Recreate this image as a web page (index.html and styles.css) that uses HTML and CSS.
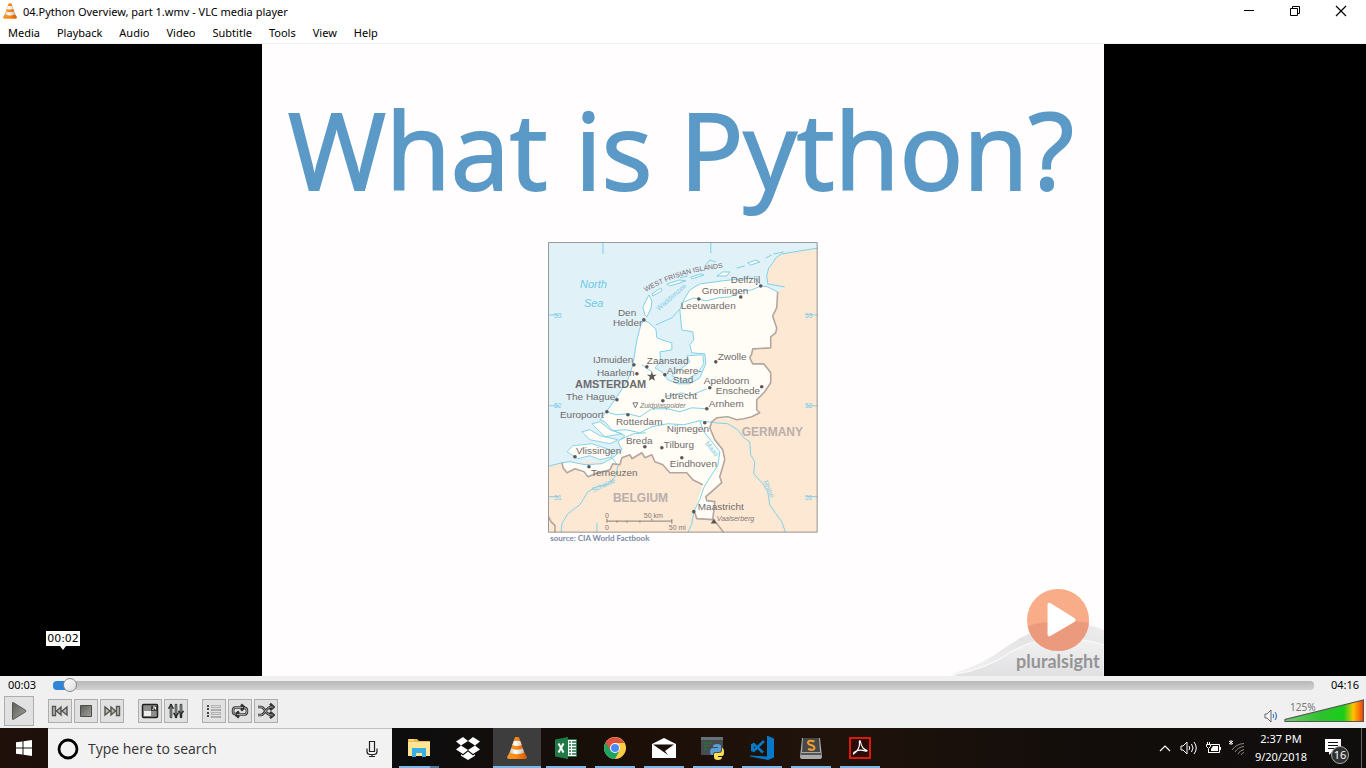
FILE: index.html
```html
<!DOCTYPE html>
<html lang="en">
<head>
<meta charset="utf-8">
<title>04.Python Overview, part 1.wmv - VLC media player</title>
<link rel="stylesheet" href="styles.css">
</head>
<body>
<svg width="0" height="0" class="defs" aria-hidden="true">
  <defs>
    <linearGradient id="coneOrange" x1="0" x2="1"><stop offset="0" stop-color="#f09a2c"/><stop offset=".45" stop-color="#ff8a12"/><stop offset="1" stop-color="#d65c04"/></linearGradient>
    <linearGradient id="coneWhite" x1="0" x2="1"><stop offset="0" stop-color="#c8c8c8"/><stop offset=".4" stop-color="#fff"/><stop offset="1" stop-color="#bcbcbc"/></linearGradient>
    <linearGradient id="steel" x1="0" x2="1" y2="1"><stop offset="0" stop-color="#5c5e5a"/><stop offset="1" stop-color="#a0a29d"/></linearGradient>
    <symbol id="cone" viewBox="0 0 20 22">
      <path d="M3 15 0 20q0 2 2 2h16q2 0 2-2l-3-5z" fill="url(#coneOrange)"/>
      <path d="M9 0h2q1 0 1.300 1l5.200 15q-7.500 4-15 0L7.700 1Q8 0 9 0z" fill="url(#coneOrange)"/>
      <path d="M6.700 4h6.600l1.400 4q-4.700 2-9.400 0zM4.200 11.500q5.800 2.500 11.600 0l1.400 4q-7.200 3.500-14.400 0z" fill="url(#coneWhite)"/>
    </symbol>
  </defs>
</svg>

<header class="titlebar">
  <svg class="app-icon"><use href="#cone"/></svg>
  <h1 class="window-title">04.Python Overview, part 1.wmv - VLC media player</h1>
  <div class="window-buttons">
    <button aria-label="Minimize"><svg width="12" height="12" viewBox="0 0 12 12"><path d="M1 5.500h10" stroke="#000"/></svg></button>
    <button aria-label="Restore"><svg width="12" height="12" viewBox="0 0 12 12" fill="none" stroke="#000"><path d="M1.500 3.500h7v7h-7zM3.500 3V1.500h7v7H9"/></svg></button>
    <button aria-label="Close"><svg width="12" height="12" viewBox="0 0 12 12"><path d="M1 1l10 10M11 1 1 11" stroke="#000" stroke-width="1.200"/></svg></button>
  </div>
</header>

<nav class="menubar" aria-label="Menu">
  <button>Media</button><button>Playback</button><button>Audio</button><button>Video</button><button>Subtitle</button><button>Tools</button><button>View</button><button>Help</button>
</nav>

<main class="video">
  <section class="slide">
    <h2 class="headline">What is Python?</h2>
    <figure class="map">
      <svg class="map-art" viewBox="548 242 270 291" role="img" aria-label="Map of the Netherlands">
        <path fill="#e0f1f8" d="M548 242h270v291H548z"/>
        <!-- neighbouring countries -->
        <path fill="#fde8d3" d="M819 248 800 251 782 254 776 258 773 263 769 268 767 276 768 284 785 287 778 292 765 330 740 345 740 400 708 415 700 470 640 450 612 462 562 463 547 467V534H819z"/>
        <!-- mainland -->
        <path fill="#fffdf6" d="M778 292 777 308 773 316 777 328 776 333 771 337V348L753 349 750 358 753 364 764 364 771 373 771 383 765 392 757 400 757 410 760 413 752 417 737 420 717 418 712 422 710 428 715 440 723 450 725 460 720 477 722 483 713 491 706 497 707 501 715 502 713 520 697 519 695 513 698 500 703 485 693 480 687 473 670 473 663 465 655 462 652 455 645 458 642 453 632 459 630 455 622 458 620 465 613 464 610 470 598 473 588 477 575 469 567 473 563 468 562 463 570 462 585 465 602 464 613 458 622 450 618 442 625 436 612 430 605 422 600 420 607 411 617 397 628 380 633 365 637 340 641 325 644 320 649 323 656 329 657 338 665 341 672 343 672 350 660 352 661 362 655 368 662 372 668 380 678 384 690 384 700 378 706 364 705 354 692 353 690 345 694 340 693 332 682 330 680 310 684 300 690 290 700 284 722 281 740 279 755 278 762 286 768 287z"/>
        <!-- polder and delta islands -->
        <path fill="#fffdf6" stroke="#8bd4ea" d="M672 376 690 362 687 356 703 355 704 364 697 374 684 381zM567 452 573 446 592 444 610 450 612 457 600 460 590 456 578 459zM582 432 590 430 600 436 618 440 610 444 590 440zM592 424 600 422 610 430 622 434 605 437z"/>
        <path fill="#fffdf6" stroke="#7cd0e8" d="M645 315l-2-8 3-6 3-6 3 6-1 8-4 8zM652 294l9-6 1 3-9 5zM667 284l13-4 6 1-16 5zM691 277l10-3 3 1-12 4zM717 276l6-4 7 0-3 4zM737 268l8-2M748 263l8-3 4 2-9 3zM766 258l6-3M774 254l10-2"/>
        <g fill="none" stroke="#7fd1e9">
          <path d="M819 248 800 251 782 254 776 258 773 263 769 268 767 276 768 284 785 287M778 292 768 287 762 286 755 278 740 279 722 281 700 284 690 290 684 300 680 310 682 330 693 332 694 340 690 345 692 353 705 354 706 364 700 378 690 384 678 384 668 380 662 372 655 368 661 362 660 352 672 350 672 343 665 341 657 338 656 329 649 323 644 320 641 325 637 340 633 365 628 380 617 397 607 411 600 420 605 422 612 430 625 436 618 442 622 450 613 458 602 464 585 465 570 462 562 463 547 467"/>
          <path d="M656 325 672 318 680 309M682 303 694 298 706 301 718 298 730 297 742 291 752 290 761 286M642 365 652 372M606 412 616 415 628 414 640 417 652 409 668 409 680 412 692 408 707 409M612 431 626 430 640 433 652 427 668 424 684 425 700 421 715 423 728 424 738 430 744 438 750 442 751 455 755 462 754 474 763 484 768 492 770 505 776 514 782 522 786 533M700 421 704 432 712 442 720 452 718 466 710 478 704 488 700 500 694 512 692 524 688 533M620 440 634 434 646 433M612 458 618 466 616 476 608 485 597 487 588 492 580 505 568 514 562 524 561 533M665 397 682 393 690 396 707 389"/>
          <path d="M706 265l4-5 6 2M680 278l8-2M603 242v12M711 242v11M548 315h11M548 406h11M548 497h11M818 315h-11M818 406h-11M818 497h-11M597 533v-10"/>
        </g>
        <g fill="none" stroke="#b3a6a0" stroke-width="1.600" stroke-linejoin="round">
          <path d="M778 292 777 308 773 316 777 328 776 333 771 337V348L753 349 752 354 750 358 753 364 764 364 768 369 771 373 771 383 765 392 757 400 757 410 760 413 752 417 744 419 737 420 728 417 717 418 712 422 710 428 715 440 723 450 725 460 720 477 722 483 713 491 706 497 707 501 715 502 713 520 697 519 695 513M703 485 693 480 687 473 670 473 663 465 655 462 652 455 645 458 642 453 632 459 630 455 622 458 620 465 613 464 610 470 598 473 588 477 584 472 575 469 567 473 563 468 562 463M548 516 551 522 555 526V533M714 520 724 533"/>
        </g>
        <path fill="none" stroke="#999" d="M548.500 242.500h269v290h-269z"/>
        <g fill="#5d5658">
          <circle cx="644" cy="320" r="1.800"/><circle cx="761" cy="286" r="1.800"/><circle cx="741" cy="297" r="1.800"/><circle cx="699" cy="299" r="1.800"/><circle cx="634" cy="365" r="1.800"/><circle cx="647" cy="367" r="1.800"/><circle cx="637" cy="374" r="1.800"/><circle cx="665" cy="375" r="1.800"/><circle cx="716" cy="362" r="1.800"/><circle cx="710" cy="388" r="1.800"/><circle cx="762" cy="387" r="1.800"/><circle cx="617" cy="400" r="1.800"/><circle cx="663" cy="401" r="1.800"/><circle cx="607" cy="412" r="1.800"/><circle cx="628" cy="415" r="1.800"/><circle cx="707" cy="409" r="1.800"/><circle cx="705" cy="423" r="1.800"/><circle cx="645" cy="447" r="1.800"/><circle cx="662" cy="448" r="1.800"/><circle cx="682" cy="458" r="1.800"/><circle cx="575" cy="457" r="1.800"/><circle cx="589" cy="467" r="1.800"/><circle cx="694" cy="512" r="1.800"/>
          <path d="M652 371l1 4h4l-3 2 1 4-3-2-3 2 1-4-3-2h4zM714 519l3 5h-6z"/>
        </g>
        <path d="M633 403h5l-2.500 5z" fill="none" stroke="#777"/>
        <path d="M607 519v4M607 521.500h65v-2M617 521v2M627 521v2M640 521v2M652 519v2M672 521v3" fill="none" stroke="#8b7c75"/>
        <g class="city">
          <text x="618" y="316">Den</text><text x="613" y="326">Helder</text><text x="731" y="283">Delfzijl</text><text x="702" y="294">Groningen</text><text x="681" y="309">Leeuwarden</text>
          <text x="593" y="363">IJmuiden</text><text x="647" y="364">Zaanstad</text><text x="597" y="376">Haarlem</text><text x="667" y="374">Almere-</text><text x="673" y="383">Stad</text>
          <text x="718" y="360">Zwolle</text><text x="704" y="384">Apeldoorn</text><text x="716" y="394">Enschede</text><text x="566" y="400">The Hague</text><text x="665" y="399">Utrecht</text>
          <text x="560" y="418">Europoort</text><text x="616" y="425">Rotterdam</text><text x="709" y="407">Arnhem</text><text x="667" y="432">Nijmegen</text><text x="626" y="444">Breda</text><text x="664" y="448">Tilburg</text>
          <text x="576" y="454">Vlissingen</text><text x="591" y="476">Terneuzen</text><text x="670" y="467">Eindhoven</text><text x="698" y="510">Maastricht</text>
        </g>
        <text class="capital" x="575" y="388">AMSTERDAM</text>
        <g class="country"><text x="742" y="436">GERMANY</text><text x="613" y="502">BELGIUM</text></g>
        <g class="sea"><text x="580" y="288">North</text><text x="584" y="307">Sea</text></g>
        <g class="minor"><text x="640" y="408">Zuidplaspolder</text><text x="717" y="521">Vaalserberg</text></g>
        <g class="tiny"><text x="605" y="518">0</text><text x="605" y="530">0</text><text x="644" y="518">50 km</text><text x="669" y="530">50 mi</text></g>
        <path id="islands" d="M646 292q35-21 85-25" fill="none"/>
        <text class="islands"><textPath href="#islands">WEST FRISIAN ISLANDS</textPath></text>
        <g class="river"><text transform="translate(659 311) rotate(-41)">Waddenzee</text><text transform="translate(593 493) rotate(-25)">Schelde</text><text transform="translate(763 482) rotate(65)">Rhine</text><text transform="translate(705 444) rotate(50)">Maas</text>
          <text x="554" y="318">53</text><text x="554" y="408">52</text><text x="554" y="500">51</text><text x="805" y="318">53</text><text x="805" y="408">52</text><text x="805" y="500">51</text></g>
      </svg>
      <figcaption>source: CIA World Factbook</figcaption>
    </figure>
    <svg class="brand" viewBox="944 580 160 96" role="img" aria-label="pluralsight">
      <defs>
        <linearGradient id="hill" x1="0" x2="1" y1="1" y2="0"><stop offset="0" stop-color="#f4f4f4"/><stop offset=".6" stop-color="#e4e4e5"/><stop offset="1" stop-color="#ededee"/></linearGradient>
        <linearGradient id="front" x1="0" y1="0" x2="0" y2="1"><stop offset="0" stop-color="#f2f2f3"/><stop offset="1" stop-color="#e0e0e2"/></linearGradient>
        <clipPath id="disc"><circle cx="1058" cy="620" r="31"/></clipPath>
      </defs>
      <path d="M954 673q28-8 52-26 20-14 42-21 30-7 56 4v47H950z" fill="url(#hill)"/>
      <path d="M956 674q28-4 55-22 30-17 58-14 20 2 35 7v32H954z" fill="url(#front)" stroke="#fafafa"/>
      <circle cx="1058" cy="620" r="31" fill="#f9ac88"/>
      <path clip-path="url(#disc)" d="M1020 630q14-8 31-8 20-3 45 2v30h-76z" fill="#ec9a7d"/>
      <path d="M1048 604.500v30q0 2 2 1l24-14q2-1.500 0-3l-24-15q-2-1-2 1z" fill="#fff" stroke="#fff"/>
      <text x="1016" y="668" class="brand-name">pluralsight</text>
    </svg>
  </section>
  <output class="seek-tip">00:02</output>
</main>

<footer class="controls">
  <div class="seek-row">
    <span>00:03</span>
    <input class="seek" type="range" min="0" max="256" value="2" aria-label="Seek">
    <span>04:16</span>
  </div>
  <div class="button-row">
    <button class="tool play" aria-label="Play"><svg width="20" height="20" viewBox="0 0 20 20"><path d="M3.500 2v16q0 .8.800.4l12.200-7.600q1-.8 0-1.600L4.300 1.600q-.8-.4-.8.4z" fill="url(#steel)" stroke="#555753"/></svg></button>
    <div class="group">
      <button class="tool" aria-label="Previous"><svg width="18" height="18" viewBox="0 0 18 18" fill="#babcb7" stroke="#555753" stroke-width="1.400"><path d="M1.500 4.500h3v9h-3zM10 5v8L5.500 9zM16 5v8l-5-4z"/></svg></button>
      <button class="tool" aria-label="Stop"><svg width="18" height="18" viewBox="0 0 18 18"><path d="M3.500 3.500h11v11h-11z" fill="url(#steel)" stroke="#4b4d49"/></svg></button>
      <button class="tool" aria-label="Next"><svg width="18" height="18" viewBox="0 0 18 18" fill="#babcb7" stroke="#555753" stroke-width="1.400"><path d="M13.500 4.500h3v9h-3zM8 5v8l4.500-4zM2 5v8l5-4z"/></svg></button>
    </div>
    <div class="group">
      <button class="tool" aria-label="Fullscreen"><svg width="18" height="18" viewBox="0 0 18 18"><rect x="1.500" y="2.500" width="15" height="13" rx="1" fill="#8d8f8a" stroke="#222" stroke-width="1.500"/><path d="M3 9h7v5H3z" fill="#eee"/><path d="M10 4h6v5h-6z" fill="#3b3d3a"/><path d="M11.500 8l3-3m-2.500 0h2.500v2.500" stroke="#fff" fill="none"/></svg></button>
      <button class="tool" aria-label="Extended settings"><svg width="18" height="18" viewBox="0 0 18 18" fill="none" stroke-linecap="round"><path d="M4 3v12M9 3v12M14 3v12" stroke="#2e3030" stroke-width="2.600"/><path d="M2 6l2-2.500L6 6M7 11.500l2 2.500 2-2.500M12 9.500l2 2 2-2" stroke="#2e3030" stroke-width="1.800"/><path d="M4 5v10M9 3v9M14 3v7" stroke="#c8c8c8" stroke-width=".8"/></svg></button>
    </div>
    <div class="group">
      <button class="tool" aria-label="Playlist"><svg width="18" height="18" viewBox="0 0 18 18"><path d="M2 3h2v2H2zM2 6h2v2H2zM2 10h2v2H2zM2 13h2v2H2z" fill="#444"/><path d="M6 4.500h10M6 8h10M6 11.500h10M6 15h10" stroke="#888a85" stroke-width="2"/><path d="M6.500 4.500h9M6.500 8h9M6.500 11.500h9M6.500 15h9" stroke="#eee" stroke-width=".8"/></svg></button>
      <button class="tool" aria-label="Loop"><svg width="18" height="18" viewBox="0 0 18 18" fill="none"><path d="M5 12H4Q2 12 2 9t2-3.500h8M13 6h1q2 0 2 3t-2 3.500H6M10 2.500l3.500 3L10 8.500M8 9.500l-3.500 3 3.500 3" stroke="#333" stroke-width="2.600"/><path d="M5 12H4Q2 12 2 9t2-3.500h8M13 6h1q2 0 2 3t-2 3.500H6" stroke="#b5b5b5" stroke-width=".9"/></svg></button>
      <button class="tool" aria-label="Random"><svg width="18" height="18" viewBox="0 0 18 18" fill="none"><path d="M1 5h3c4 0 5 8 10 8h2M1 13h3c4 0 5-8 10-8h2M13 1.800 16.500 5 13 8M13 10l3.500 3-3.500 3" stroke="#333" stroke-width="2.600"/><path d="M1 5h3c4 0 5 8 10 8h2M1 13h3c4 0 5-8 10-8h2" stroke="#b5b5b5" stroke-width=".9"/></svg></button>
    </div>
    <div class="volume">
      <button class="mute" aria-label="Mute"><svg width="15" height="14" viewBox="0 0 15 14" fill="none"><path d="M1 5h2l4-4v12L3 9H1z" fill="#f4f4f4" stroke="#666"/><path d="M9 5q1.500 2 0 4M11 3q3 4 0 8" stroke="#3f78c0" stroke-width="1.200"/></svg></button>
      <div class="volume-meter">
        <svg width="80" height="24" viewBox="0 0 80 24"><defs><linearGradient id="vol"><stop offset="0" stop-color="#72cc72"/><stop offset=".45" stop-color="#2fc02f"/><stop offset=".75" stop-color="#18cf18"/><stop offset=".87" stop-color="#ffc400"/><stop offset="1" stop-color="#f43c0c"/></linearGradient></defs><path d="M1 22.500h78.500V1L1 20.500z" fill="url(#vol)" stroke="#555" stroke-width="1.200"/></svg>
        <label for="volume">125%</label>
        <input id="volume" type="range" min="0" max="125" value="125">
      </div>
    </div>
  </div>
</footer>

<div class="taskbar">
  <button class="start" aria-label="Start"><svg width="16" height="16" viewBox="0 0 16 16"><path d="M0 2.300 6.500 1.400v6.100H0zM7.500 1.200 16 0v7.500H7.500zM0 8.500h6.500v6.100L0 13.700zM7.500 8.500H16V16l-8.500-1.200z" fill="#fff"/></svg></button>
  <label class="search">
    <svg width="22" height="22" viewBox="0 0 22 22"><circle cx="11" cy="11" r="9" fill="none" stroke="#000" stroke-width="2.800"/></svg>
    <input type="text" placeholder="Type here to search" aria-label="Search">
    <svg width="12" height="18" viewBox="0 0 12 18" fill="none" stroke="#222" stroke-width="1.200"><path d="M3.500 1.500h5v10h-5zM1 8.500v3q0 3 3 3h4q3 0 3-3v-3M6 14.500v2M3 16.500h6"/></svg>
  </label>
  <div class="apps">
    <button class="app running stacked" aria-label="File Explorer"><svg width="22" height="20" viewBox="0 0 22 20"><path d="M0 1h9l2 2h11v15H0z" fill="#e7b94d"/><path d="M0 4h22v14H0z" fill="#ffe594"/><path d="M4 10h14v9h-4v-4H8v4H4z" fill="#3aaee4"/><path d="M1 2h5" stroke="#fff3c7"/></svg></button>
    <button class="app" aria-label="Dropbox"><svg width="24" height="24" viewBox="0 0 24 24" fill="#fff"><path d="M7 1l5 4-7 4.500L0 5.500zM17 1l7 4.500-5 4L12 5zM0 13.500l5-4 7 4.500-5 4zM19 9.500l5 4-7 4.500-5-4zM12 15.500l5 4 2-1.200v1.500L12 24l-7-4.200v-1.500L7 19.500z"/></svg></button>
    <button class="app running active" aria-label="VLC media player"><svg width="20" height="22"><use href="#cone"/></svg></button>
    <button class="app running" aria-label="Excel"><svg width="22" height="22" viewBox="0 0 22 22"><path d="M11 2.500h10.500v17H11z" fill="#fff" stroke="#1f7a48"/><path d="M14 5h2m1 0h4m-7 3h2m1 0h4m-7 3h2m1 0h4m-7 3h2m1 0h4m-7 3h2m1 0h4" stroke="#1f7a48" stroke-width="1.600"/><path d="M0 2.500 13 0v22L0 19.500z" fill="#1f7a48"/><path d="M3.500 6.500l5 9M8.500 6.500l-5 9" stroke="#fff" stroke-width="2"/></svg></button>
    <button class="app running" aria-label="Chrome"><svg width="22" height="22" viewBox="0 0 22 22"><circle cx="11" cy="11" r="11" fill="#ffce44"/><path d="M11 11 1.500 5.500A11 11 0 0 0 11 22l4.500-8.500z" fill="#1da362"/><path d="M1.500 5.500A11 11 0 0 1 20.500 6H11L6.500 13.500z" fill="#de5246"/><circle cx="11" cy="11" r="5" fill="#fff"/><circle cx="11" cy="11" r="4" fill="#4c8bf5"/></svg></button>
    <button class="app running" aria-label="Mail"><svg width="24" height="20" viewBox="0 0 24 20"><path d="M0 6 12 0l12 6v14H0z" fill="#fff"/><path d="M1 6.500h21L13 13l3 4L1 6.500z" fill="#1b0f08"/></svg></button>
    <button class="app running" aria-label="Python"><svg width="24" height="24" viewBox="0 0 24 24"><path d="M0 1h22v18H0z" fill="#474c50"/><path d="M0 1h22v3H0z" fill="#66717a"/><path d="M3 7h3m1 0h4M3 10h4M3 13h3" stroke="#26733c" stroke-width="1.500"/><path d="M9 16q0-4 3-4h5v-1h-5q-.5-3 4-3t4 3v3q0 2-2 2h-4q-2 0-2 3h-1q-2 0-2-3z" fill="#5a9fd4"/><path d="M23 16q0-4-2-4v2q0 3-3 3h-4q-1 0-1 2v2q0 3 4 3t4-3h-4v-1h4q2 0 2-4z" fill="#ffe052"/></svg></button>
    <button class="app running" aria-label="Visual Studio Code"><svg width="24" height="24" viewBox="0 0 24 24"><path d="M18 0l6 2.500v19L18 24 0 20.500v-1l17 1V0z" fill="#0879c8"/><path d="M3 7.500l10 9M3 15.500 14 5" stroke="#0879c8" stroke-width="2.700" fill="none"/><path d="M1 8l3-1v9l-3-1z" fill="#0879c8"/></svg></button>
    <button class="app running" aria-label="Sublime Text"><svg width="22" height="22" viewBox="0 0 22 22"><path d="M2 1h18l2 19q0 2-2 2H2q-2 0-2-2z" fill="#aaa"/><path d="M3 1h16l1 14H2z" fill="#484848"/><path d="M1 17h20" stroke="#555" stroke-width="2"/><path d="M14.500 4.500Q8 2.500 8 5.500q0 2 3 2.500 3.500 1 3.500 3 0 3-6.500 1" fill="none" stroke="#f59b32" stroke-width="2"/></svg></button>
    <button class="app running" aria-label="Acrobat Reader"><svg width="22" height="22" viewBox="0 0 22 22" fill="none"><path d="M1 1h20v20H1z" fill="#2a0c08" stroke="#d8190c" stroke-width="2"/><path d="M4.500 17C8 15 11 10 10.500 6q-.5-2.500.7-2Q12 8 14 11q2 2 4 2.500 0 1-2 .500Q11 12 6.500 14.500q-2.500 1.500-2 2.500z" stroke="#fff" stroke-width="1.200"/></svg></button>
  </div>
  <div class="tray">
    <button aria-label="Show hidden icons"><svg width="12" height="8" viewBox="0 0 12 8" fill="none" stroke="#fff" stroke-width="1.200"><path d="M1 7l5-5 5 5"/></svg></button>
    <button aria-label="Speakers"><svg width="18" height="14" viewBox="0 0 18 14" fill="none" stroke="#fff"><path d="M1 5h2l4-4v12L3 9H1zM9 5q1.500 2 0 4M11.500 3q3 4 0 8M14 1q4.500 6 0 12"/></svg></button>
    <button aria-label="Battery"><svg width="16" height="14" viewBox="0 0 16 14" fill="none" stroke="#fff"><path d="M6 3.500h8.500v8H3.500V8M15.500 6v3"/><path d="M8 5h5v5H6V8z" fill="#fff" stroke="none"/><path d="M2.500 1v2M4.500 1v2M1.500 3.500h4v2l-2 2-2-2zM3.500 8v4" fill="#170e0a"/></svg></button>
    <button aria-label="Network"><svg width="18" height="18" viewBox="0 0 18 18" fill="none" stroke="#8d8987"><path d="M4 11q4-6 12-6.500M7 13q3-5 9-5.500M10 15q2-4 6-4.500M13 16q1-2 3-2.500"/><path d="M3 1v5M1 2l4 3M5 2 1 5" stroke="#fff"/></svg></button>
    <time class="clock" datetime="2018-09-20T14:37"><span>2:37 PM</span><span>9/20/2018</span></time>
    <button class="notify" aria-label="16 notifications"><svg width="16" height="16" viewBox="0 0 16 16"><path d="M0 0h16v13H7l-3 3v-3H0z" fill="#fff"/><path d="M3 3.500h10M3 6.500h10M3 9.500h6" stroke="#111"/></svg><span class="badge">16</span></button>
    <button class="peek" aria-label="Show desktop"></button>
  </div>
</div>
</body>
</html>
```

FILE: styles.css
```css
* { box-sizing: border-box; }
body { margin: 0; height: 100vh; display: flex; flex-direction: column; overflow: hidden; background: #fff; color: #000; font: 12px/16px "Noto Sans", "Open Sans", sans-serif; }
button { margin: 0; padding: 0; border: 0; background: none; color: inherit; font: inherit; }
button svg { display: block; }
.defs { position: absolute; }

.titlebar { display: flex; align-items: center; height: 22px; flex: none; padding-left: 3px; }
.app-icon { width: 14px; height: 16px; margin-right: 6px; }
.window-title { flex: 1; margin: 0; padding-top: 2px; font-size: 11px; font-weight: 400; line-height: 16px; }
.window-buttons { display: flex; padding-right: 2px; }
.window-buttons button { width: 46px; height: 22px; display: grid; place-items: center; }

.menubar { display: flex; flex: none; gap: 17px; height: 22px; padding: 0 8px; border-bottom: 1px solid #f0f0f0; align-items: center; font-size: 11px; }

.video { position: relative; flex: 1; min-height: 0; display: flex; justify-content: center; background: #000; }
.slide { position: relative; height: 100%; aspect-ratio: 4 / 3; display: flex; flex-direction: column; align-items: center; background: #fffdfe; overflow: hidden; }
.headline { margin: 0; padding: 33px 4px 0 0; color: #5b99c7; font: 400 106px/144px "Open Sans", sans-serif; white-space: nowrap; -webkit-text-stroke: 2px #5b99c7; }
.map { margin: 21px 0 0; width: 32%; }
.map-art { display: block; width: 100%; font-family: "Liberation Sans", Arial, sans-serif; }
.map figcaption { padding-left: 2px; color: #7b8ba9; font: 8px/10px Lato, sans-serif; font-weight: 700; }
.city { font-size: 10px; fill: #706a6b; }
.capital { font-size: 11px; font-weight: 700; fill: #706a6b; }
.country { font-size: 12px; font-weight: 700; fill: #b9aeab; }
.sea { font-size: 11px; font-style: italic; fill: #6fcae5; }
.minor { font-size: 7px; font-style: italic; fill: #817a7a; }
.tiny { font-size: 7px; fill: #817a7a; }
.islands { font-size: 7px; fill: #706a6b; }
.river { font-size: 7px; fill: #7dcbe6; }
.brand { position: absolute; right: 0; bottom: 0; width: 19%; }
.brand-name { font: 700 18px Lato, sans-serif; fill: #959595; }
.seek-tip { position: absolute; left: 46px; bottom: 30px; width: 34px; height: 15px; background: #fff; text-align: center; font: 11px/15px "DejaVu Sans", sans-serif; }
.seek-tip::after { content: ""; position: absolute; left: 14px; top: 15px; border: 3px solid transparent; border-top: 4px solid #fff; border-bottom: 0; }

.controls { flex: none; background: #f0f0f0; }
.seek-row { display: flex; align-items: center; gap: 17px; height: 18px; padding: 0 7px 0 8px; font-size: 11px; }
.seek { flex: 1; min-width: 0; height: 16px; margin: 0; appearance: none; background: none; }
.seek::-webkit-slider-runnable-track { height: 9px; border-radius: 4px; background: linear-gradient(90deg, #2f85d8 1%, transparent 1%), linear-gradient(#b8b8b8, #d2d2d2); }
.seek::-webkit-slider-thumb { appearance: none; width: 14px; height: 14px; margin-top: -3px; border: 1px solid #888; border-radius: 50%; background: linear-gradient(135deg, #fff, #ddd); }
.button-row { display: flex; align-items: center; gap: 14px; height: 34px; padding: 0 2px 0 4px; }
.group { display: flex; gap: 2px; }
.tool { width: 24px; height: 24px; display: grid; place-items: center; border: 1px solid #adadad; background: #e1e1e1; }
.play { width: 30px; height: 30px; }
.volume { display: flex; align-items: flex-end; gap: 5px; margin-left: auto; }
.volume-meter { position: relative; width: 80px; height: 24px; }
.volume-meter svg { display: block; }
.volume-meter label { position: absolute; left: 6px; top: 2px; color: #777; font-size: 10px; line-height: 12px; }
.volume-meter input { position: absolute; inset: 0; width: 100%; height: 100%; margin: 0; opacity: 0; }

.taskbar { display: flex; flex: none; height: 40px; background: linear-gradient(90deg, #1f100a, #0d0d0e 30%, #1b0f08 46%, #20130b 60%, #120d0b 80%, #100e0d); color: #fff; }
.start { width: 48px; display: grid; place-items: center; }
.search { display: flex; align-items: center; width: 344px; padding: 0 14px 0 9px; border-top: 1px solid #c0c0c0; background: #f2f2f2; }
.search input { flex: 1; min-width: 0; margin-left: 9px; padding: 0; border: 0; outline: 0; background: none; font: 14px/20px "Open Sans", sans-serif; }
.search input::placeholder { color: #333; opacity: 1; }
.apps { display: flex; gap: 1px; margin-left: 3px; }
.app { position: relative; width: 48px; display: grid; place-items: center; }
.running::after { content: ""; position: absolute; left: 4px; right: 4px; bottom: 0; height: 2px; background: #76b9ed; }
.stacked::after { background: linear-gradient(90deg, #76b9ed 78%, #4e7b9d 78%); }
.active { background: #3d3d3e; }
.active::after { left: 0; right: 0; }
.tray { display: flex; align-items: center; margin-left: auto; }
.tray button { width: 24px; height: 40px; display: grid; place-items: center; }
.clock { display: grid; width: 64px; text-align: center; font-size: 11px; line-height: 18px; }
.tray .notify { position: relative; width: 48px; }
.notify svg { margin: 0 8px 2px 0; }
.badge { position: absolute; left: 18px; top: 18px; width: 18px; height: 18px; border: 1px solid #aaa; border-radius: 50%; background: #303030; font-size: 11px; line-height: 16px; }
.tray .peek { width: 5px; border-left: 1px solid #666; }
```
